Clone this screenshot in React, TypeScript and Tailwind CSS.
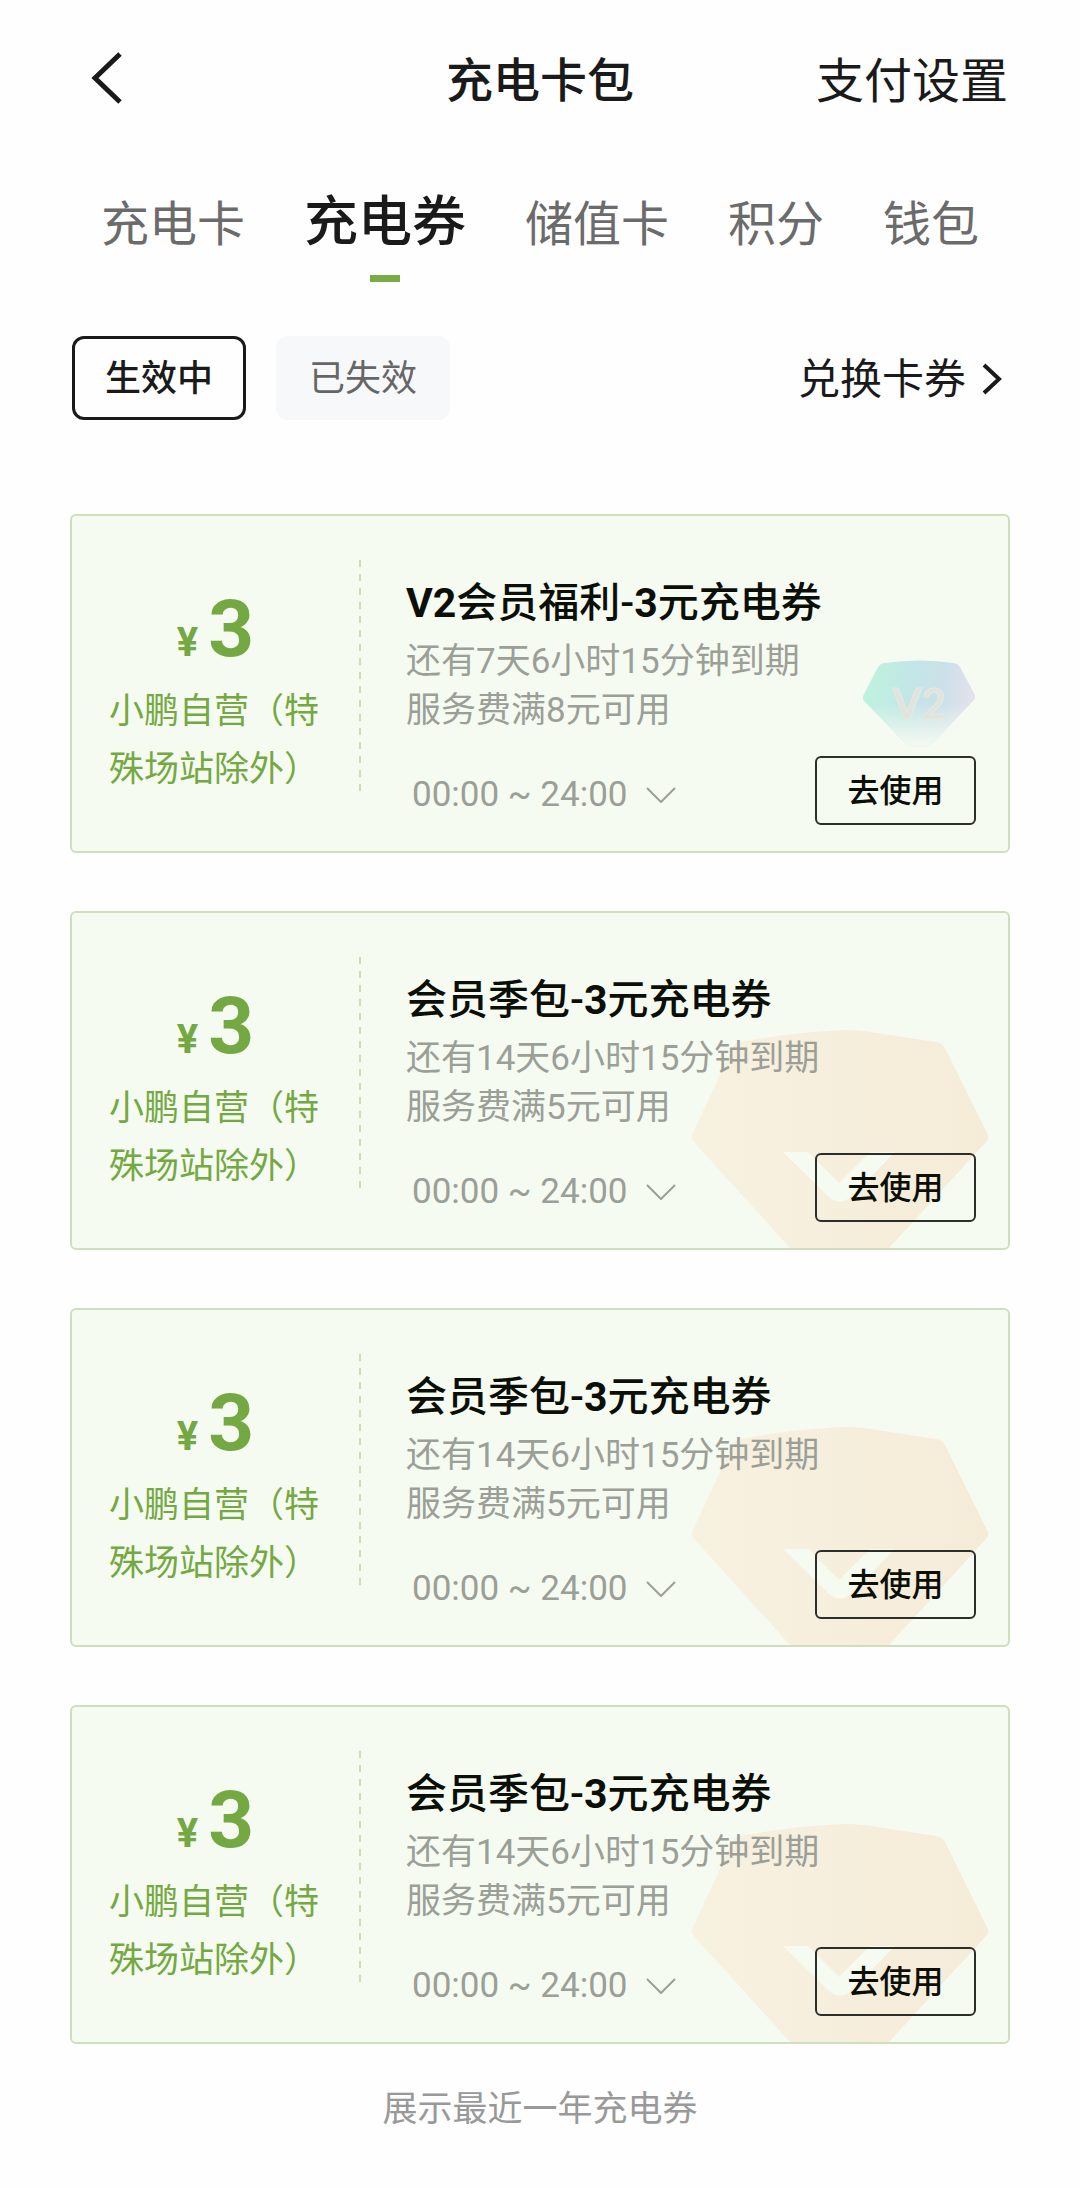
import { useState } from 'react';

type Coupon = {
    id: number
    amount: number
    scope: string
    title: string[]
    expires: string
    condition: string
    time: string
    badge: 'v2' | 'season'
}

const TABS = ['充电卡', '充电券', '储值卡', '积分', '钱包'];
const FILTERS = ['生效中', '已失效'];

const seasonCoupon = {
    amount: 3,
    scope: '小鹏自营（特殊场站除外）',
    title: ['会员季包-', '3', '元充电券'],
    expires: '还有14天6小时15分钟到期',
    condition: '服务费满5元可用',
    time: '00:00 ~ 24:00',
    badge: 'season' as const,
};

const COUPONS: Coupon[] = [
    {
        id: 1,
        amount: 3,
        scope: '小鹏自营（特殊场站除外）',
        title: ['V2', '会员福利-', '3', '元充电券'],
        expires: '还有7天6小时15分钟到期',
        condition: '服务费满8元可用',
        time: '00:00 ~ 24:00',
        badge: 'v2',
    },
    { id: 2, ...seasonCoupon },
    { id: 3, ...seasonCoupon },
    { id: 4, ...seasonCoupon },
];

const V2Badge = () => (
    <svg className="absolute right-8 top-[144px] h-[88px] w-[114px]" viewBox="0 0 114 88" aria-hidden="true">
        <defs>
            <linearGradient id="v2-color" x1="0" y1="0.4" x2="1" y2="0.5">
                <stop offset="0" stopColor="#bdf3de" />
                <stop offset="0.4" stopColor="#c3e6e6" />
                <stop offset="0.7" stopColor="#cbe0ea" />
                <stop offset="1" stopColor="#e5e2ec" />
            </linearGradient>
            <linearGradient id="v2-fade" x1="0" y1="0" x2="0" y2="1">
                <stop offset="0.5" stopColor="#f5fbf0" stopOpacity="0" />
                <stop offset="1" stopColor="#f5fbf0" stopOpacity="1" />
            </linearGradient>
        </defs>
        <path d="M22 3Q57 -2 92 3Q96 4 98 7L112 33Q114 37 112 40L74 80Q67 87 57 87Q47 87 40 80L2 41Q0 38 2 34L16 7Q18 4 22 3Z" fill="url(#v2-color)" />
        <path d="M22 3Q57 -2 92 3Q96 4 98 7L112 33Q114 37 112 40L74 80Q67 87 57 87Q47 87 40 80L2 41Q0 38 2 34L16 7Q18 4 22 3Z" fill="url(#v2-fade)" />
        <text x="57" y="59" textAnchor="middle" fontFamily="Lato, sans-serif" fontSize="42" fontWeight="700" fill="#dfe5de" stroke="#e6e9e0" strokeWidth="1">V2</text>
    </svg>
);

const SeasonBadge = ({ id }: { id: number }) => (
    <svg className="absolute bottom-0 right-[18px] h-[220px] w-[300px]" viewBox="0 0 300 220" aria-hidden="true">
        <defs>
            <linearGradient id={`season-${id}`} x1="0" y1="0" x2="1" y2="0">
                <stop offset="0" stopColor="#f7f1e0" />
                <stop offset="1" stopColor="#f5ecd8" />
            </linearGradient>
        </defs>
        <path
            fillRule="evenodd"
            fill={`url(#season-${id})`}
            d="M49 14Q100 5 138 3Q156 1 174 3L246 14Q252 15 255 20L297 105Q300 110 296 114L199 220H100L4 114Q0 110 3 105L43 19Q45 15 49 14ZM93 124L140 170Q150 177 160 170L205 124H180L149 155L118 124Z"
        />
    </svg>
);

const CouponCard = ({ coupon }: { coupon: Coupon }) => {
    const [open, setOpen] = useState(false);

    return (
        <li className="relative flex overflow-hidden rounded-md border-2 border-[#cfdfbb] bg-[#f5fbf0]">
            {coupon.badge === 'v2' ? <V2Badge /> : <SeasonBadge id={coupon.id} />}

            <div className="relative w-[287px] shrink-0 px-[37px] pt-[73px] text-[#74a843]">
                <div className="flex items-baseline justify-center gap-[10px] font-bold">
                    <span className="text-[40px] leading-[80px]">¥</span>
                    <span className="text-[80px] leading-[80px]">{coupon.amount}</span>
                </div>
                <p className="text-[35px] leading-[58px]">{coupon.scope}</p>
            </div>

            <div className="relative mb-[60px] mt-[44px] w-[2px] shrink-0 bg-[repeating-linear-gradient(to_bottom,#cbddb5_0_7px,transparent_7px_14px)]" />

            <div className="relative min-w-0 flex-1 pb-[26px] pl-[45px] pr-8 pt-[63px]">
                <h2 className="text-[41px] font-medium leading-[48px] text-[#0b0f08]">
                    {coupon.title.map((part, i) => (
                        <span key={i} className={/^[V\d]/.test(part) ? 'font-bold' : ''}>{part}</span>
                    ))}
                </h2>
                <p className="mt-[10px] text-[35px] leading-[49px] text-[#9b9f97]">{coupon.expires}</p>
                <p className="text-[35px] leading-[49px] text-[#9b9f97]">{coupon.condition}</p>
                <div className="mt-[21px] flex items-center justify-between">
                    <button
                        className="flex items-center gap-[18px] pl-[6px] pt-2 text-[35px] leading-[49px] text-[#9b9f97]"
                        aria-expanded={open}
                        onClick={() => setOpen(!open)}
                    >
                        {coupon.time}
                        <svg className="h-4 w-[30px]" viewBox="0 0 30 16" fill="none" stroke="currentColor" strokeWidth="2" aria-hidden="true">
                            <path d="M1 1L15 15L29 1" />
                        </svg>
                    </button>
                    <button className="h-[69px] w-[161px] rounded-md border-2 border-[#2b2e29] text-[32px] font-medium text-[#0b0f08]">
                        去使用
                    </button>
                </div>
            </div>
        </li>
    );
};

const App = () => {
    const [tab, setTab] = useState('充电券');
    const [filter, setFilter] = useState('生效中');

    return (
        <div className="min-h-screen bg-[#fefefe] pb-12 font-[Roboto,'Noto_Sans_CJK_SC',sans-serif] text-[#1a1a1a]">
            <header className="grid h-[163px] grid-cols-[1fr_auto_1fr] items-center px-[72px]">
                <button className="justify-self-start pb-2 pl-[18px]" aria-label="返回">
                    <svg className="h-[52px] w-8" viewBox="0 0 32 52" fill="none" stroke="currentColor" strokeWidth="5" aria-hidden="true">
                        <path d="M30 2L5 26L30 50" />
                    </svg>
                </button>
                <h1 className="text-[47px] font-medium">充电卡包</h1>
                <a href="#settings" className="justify-self-end text-[48px]">支付设置</a>
            </header>

            <nav className="flex items-baseline gap-[59px] px-[101px] pt-6">
                {TABS.map((name) => (
                    <button
                        key={name}
                        className={`flex flex-col items-center whitespace-nowrap leading-[72px] ${tab === name ? 'text-[54px] font-medium' : 'text-[48px] text-[#6b6b6b]'}`}
                        onClick={() => setTab(name)}
                    >
                        {name}
                        {tab === name && <span className="mt-4 h-[7px] w-[30px] bg-[#7aac44]" />}
                    </button>
                ))}
            </nav>

            <div className="mt-[54px] flex items-center px-[72px]">
                <div className="flex gap-[30px]">
                    {FILTERS.map((name) => (
                        <button
                            key={name}
                            className={`h-[84px] w-[174px] rounded-xl pt-[2px] text-[36px] ${filter === name ? 'border-[3px] border-[#1a1a1a] font-medium' : 'bg-[#f7f8fa] text-[#666666]'}`}
                            onClick={() => setFilter(name)}
                        >
                            {name}
                        </button>
                    ))}
                </div>
                <a href="#redeem" className="ml-auto flex items-center gap-4 pr-[6px] pt-[2px] text-[42px]">
                    兑换卡券
                    <svg className="h-8 w-5" viewBox="0 0 20 32" fill="none" stroke="currentColor" strokeWidth="4" aria-hidden="true">
                        <path d="M2 2L17 16L2 30" />
                    </svg>
                </a>
            </div>

            <ul className="mt-[94px] flex flex-col gap-[58px] px-[70px]">
                {COUPONS.map((coupon) => (
                    <CouponCard key={coupon.id} coupon={coupon} />
                ))}
            </ul>

            <p className="mt-10 text-center text-[35px] leading-[52px] text-[#999999]">展示最近一年充电券</p>
        </div>
    );
};

export default App;
